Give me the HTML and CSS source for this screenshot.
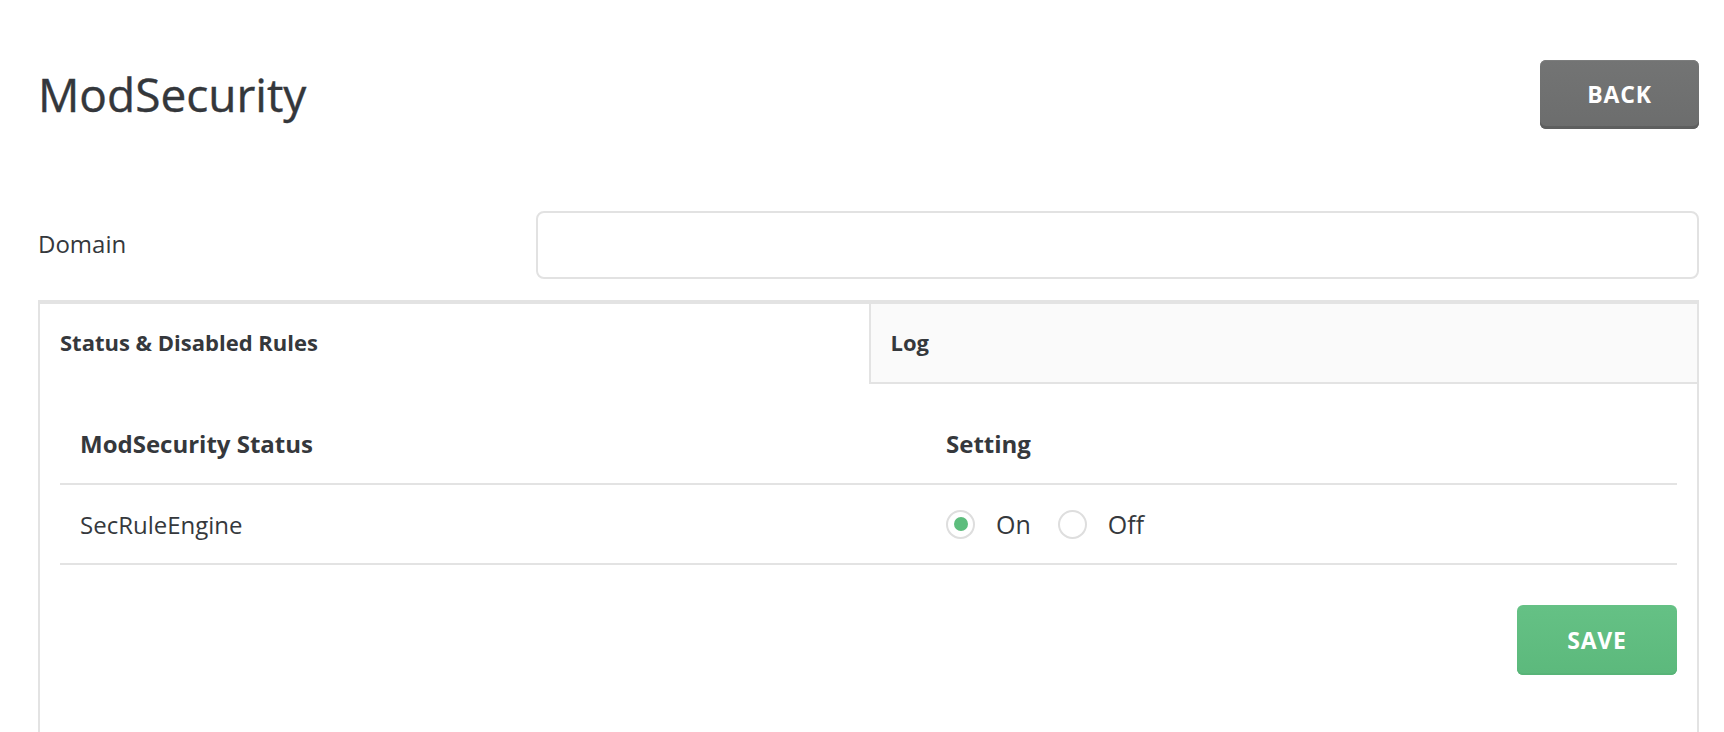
FILE: index.html
```html
<!DOCTYPE html>
<html lang="en">
<head>
<meta charset="utf-8">
<title>ModSecurity</title>
<link rel="stylesheet" href="styles.css">
</head>
<body>
<main class="page">
  <header class="page-header">
    <h1 class="page-title">ModSecurity</h1>
    <button class="btn btn-back" type="button">BACK</button>
  </header>

  <div class="field-row">
    <label class="field-label" for="domain">Domain</label>
    <input class="field-input" id="domain" type="text">
  </div>

  <section class="tabs">
    <nav class="tab-bar">
      <div class="tab tab-active">Status &amp; Disabled Rules</div>
      <div class="tab">Log</div>
    </nav>

    <div class="tab-panel">
      <table class="rules-table">
        <thead>
          <tr>
            <th class="col-name">ModSecurity Status</th>
            <th>Setting</th>
          </tr>
        </thead>
        <tbody>
          <tr>
            <td class="col-name">SecRuleEngine</td>
            <td>
              <div class="radio-group">
                <label class="radio">
                  <span class="radio-dot radio-checked"></span>
                  <span class="radio-text">On</span>
                </label>
                <label class="radio">
                  <span class="radio-dot"></span>
                  <span class="radio-text">Off</span>
                </label>
              </div>
            </td>
          </tr>
        </tbody>
      </table>

      <div class="panel-actions">
        <button class="btn btn-save" type="button">SAVE</button>
      </div>
    </div>
  </section>
</main>
</body>
</html>
```

FILE: styles.css
```css
* {
  box-sizing: border-box;
}

html, body {
  margin: 0;
  background: #ffffff;
}

body {
  font-family: "Open Sans", "Noto Sans", "Liberation Sans", sans-serif;
  color: #35383c;
}

.page {
  padding: 60px 25px 0 38px;
}

/* Title bar */
.page-header {
  display: flex;
  align-items: center;
  justify-content: space-between;
}

.page-title {
  margin: 0;
  font-size: 46px;
  font-weight: 400;
  line-height: 1.2;
  color: #34373b;
  -webkit-text-stroke: 0.4px #34373b;
}

.btn {
  border: 0;
  font-family: inherit;
  font-weight: 700;
  font-size: 23px;
  letter-spacing: 0.8px;
  color: #ffffff;
  cursor: pointer;
}

.btn-back {
  width: 159px;
  height: 69px;
  border-radius: 6px;
  background: linear-gradient(#737474, #6c6d6d);
  box-shadow: inset 0 -3px 0 #5e5f5f, inset 0 1px 0 #7c7d7d;
  padding-bottom: 3px;
}

/* Domain field */
.field-row {
  display: grid;
  grid-template-columns: 30% 70%;
  align-items: center;
  margin-top: 82px;
}

.field-label {
  font-size: 24px;
  line-height: 1;
  padding-bottom: 2px;
}

.field-input {
  height: 68px;
  width: 100%;
  border: 2px solid #e2e2e2;
  border-radius: 8px;
  background: #ffffff;
  font: inherit;
}

/* Tabs */
.tabs {
  margin-top: 21px;
  border: 2px solid #e3e3e3;
  border-top-width: 4px;
  border-bottom: 0;
  min-height: 460px;
}

.tab-bar {
  display: grid;
  grid-template-columns: 1fr 1fr;
}

.tab {
  height: 80px;
  display: flex;
  align-items: center;
  padding: 0 20px 2px;
  font-size: 22px;
  font-weight: 700;
  background: #fafafa;
  border-bottom: 2px solid #e3e3e3;
  border-left: 2px solid #e3e3e3;
}

.tab-active {
  background: #ffffff;
  border-bottom-color: transparent;
  border-left: 0;
}

.tab-panel {
  padding: 20px 20px 60px;
}

.rules-table {
  width: 100%;
  border-collapse: collapse;
}

.rules-table th,
.rules-table td {
  height: 80px;
  padding: 0 20px;
  text-align: left;
  vertical-align: middle;
  border-bottom: 2px solid #e3e3e3;
}

.rules-table th {
  font-size: 24px;
  font-weight: 700;
}

.rules-table td {
  font-size: 24px;
  font-weight: 400;
}

.col-name {
  width: 866px;
}

.radio-group {
  display: flex;
  align-items: center;
  gap: 27px;
}

.radio {
  display: flex;
  align-items: center;
  gap: 21px;
}

.radio-dot {
  width: 29px;
  height: 29px;
  border: 2px solid #dedede;
  border-radius: 50%;
  display: flex;
  align-items: center;
  justify-content: center;
}

.radio-checked::after {
  content: "";
  width: 14px;
  height: 14px;
  border-radius: 50%;
  background: #5dbd7d;
}

.radio-text {
  font-size: 25px;
}

.panel-actions {
  display: flex;
  justify-content: flex-end;
  margin-top: 40px;
}

.btn-save {
  width: 160px;
  height: 70px;
  border-radius: 6px;
  background: linear-gradient(#65c185, #5cb97c);
  box-shadow: inset 0 -2px 0 #58b478;
}
```
